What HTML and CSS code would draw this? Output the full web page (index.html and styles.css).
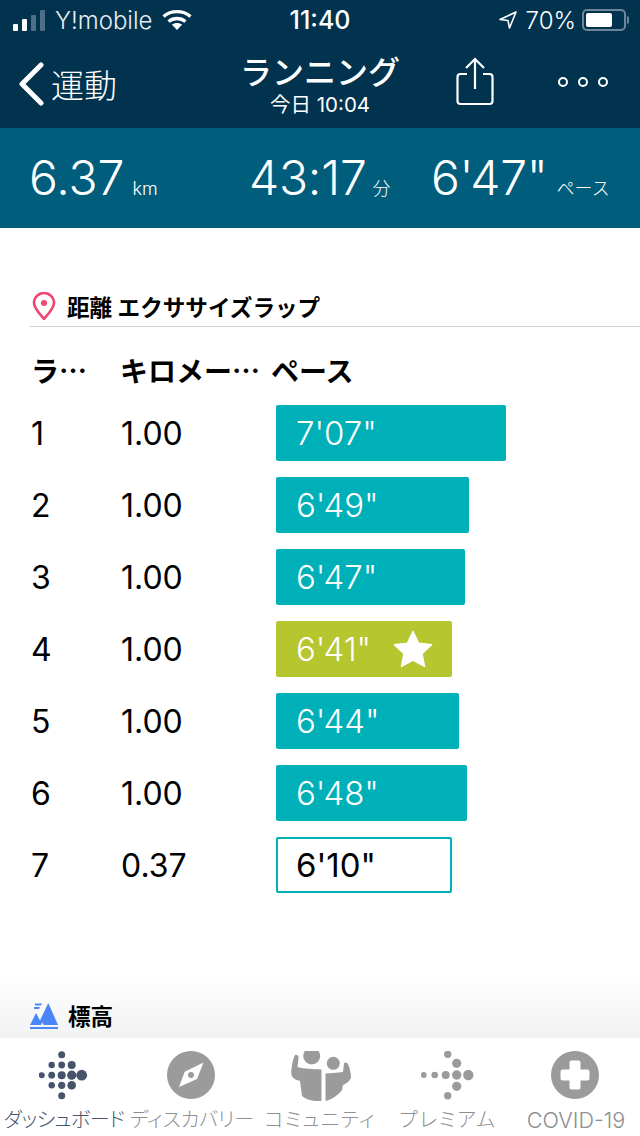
FILE: index.html
```html
<!DOCTYPE html>
<html lang="ja">
<head>
    <meta charset="UTF-8">
    <meta name="viewport" content="width=device-width, initial-scale=1.0">
    <title>ランニング</title>
    <link rel="stylesheet" href="styles.css">
</head>
<body>
    <div class="screen">
        <header class="top">
            <div class="status">
                <div class="status-left">
                    <span class="signal"><i class="on s1"></i><i class="on s2"></i><i class="s3"></i><i class="s4"></i></span>
                    <span class="carrier">Y!mobile</span>
                    <svg class="wifi" width="30" height="22" viewBox="0 0 30 22"><path d="M1.5 7.5C9 1 21 1 28.5 7.5" fill="none" stroke="#fff" stroke-width="3.4"/><path d="M6.5 12.5C11.5 8.5 18.5 8.5 23.5 12.5" fill="none" stroke="#fff" stroke-width="3.4"/><path d="M15 21L9.8 15.6C13 13.4 17 13.4 20.2 15.6Z" fill="#fff"/></svg>
                </div>
                <div class="clock">11:40</div>
                <div class="status-right">
                    <svg width="20" height="20" viewBox="0 0 20 20"><path d="M18 2L2 9.5L10 10.5L11.5 18Z" fill="none" stroke="#fff" stroke-width="1.6" stroke-linejoin="round"/></svg>
                    <span class="percent">70%</span>
                    <span class="battery"><span class="charge"></span></span>
                    <span class="battery-cap"></span>
                </div>
            </div>
            <nav class="nav">
                <div class="back">
                    <svg width="28" height="44" viewBox="0 0 28 44"><path d="M24 3L5 22L24 41" fill="none" stroke="#fff" stroke-width="5" stroke-linecap="round" stroke-linejoin="round"/></svg>
                    <span>運動</span>
                </div>
                <div class="title">
                    <div class="title-main">ランニング</div>
                    <div class="title-sub">今日 10:04</div>
                </div>
                <svg class="share" width="40" height="50" viewBox="0 0 40 50"><path d="M12 17H5.500A3 3 0 0 0 2.500 20V44A3 3 0 0 0 5.500 47H34.500A3 3 0 0 0 37.500 44V20A3 3 0 0 0 34.500 17H28" fill="none" stroke="#fff" stroke-width="2.200"/><path d="M20 32V3M11 11L20 2L29 11" fill="none" stroke="#fff" stroke-width="2.200"/></svg>
                <div class="more"><i></i><i></i><i></i></div>
            </nav>
        </header>

        <section class="summary">
            <div class="stat stat-dist"><b>6.37</b><small>km</small></div>
            <div class="stat stat-time"><b>43:17</b><small>分</small></div>
            <div class="stat stat-pace"><b>6'47"</b><small>ペース</small></div>
        </section>

        <main class="content">
            <h2 class="section-head">
                <svg width="28" height="28" viewBox="0 0 28 28"><path d="M14 27C9 21 4 16 4 11A10 10 0 0 1 24 11C24 16 19 21 14 27Z" fill="none" stroke="#f0466f" stroke-width="2.600" stroke-linejoin="round"/><circle cx="14" cy="11" r="3" fill="#f0466f"/></svg>
                <span>距離 エクササイズラップ</span>
            </h2>
            <div class="table">
                <div class="row head">
                    <div class="col-lap">ラ…</div>
                    <div class="col-km">キロメー…</div>
                    <div class="col-pace">ペース</div>
                </div>
                <div class="row">
                    <div class="col-lap">1</div><div class="col-km">1.00</div>
                    <div class="bar" style="width: 230px">7'07"</div>
                </div>
                <div class="row">
                    <div class="col-lap">2</div><div class="col-km">1.00</div>
                    <div class="bar" style="width: 193px">6'49"</div>
                </div>
                <div class="row">
                    <div class="col-lap">3</div><div class="col-km">1.00</div>
                    <div class="bar" style="width: 189px">6'47"</div>
                </div>
                <div class="row">
                    <div class="col-lap">4</div><div class="col-km">1.00</div>
                    <div class="bar best" style="width: 176px">6'41"
                        <svg class="star" width="40" height="38" viewBox="0 0 40 38"><path d="M20 1.500L25.600 13.200L38.500 14.800L29 23.600L31.500 36.400L20 30.200L8.500 36.400L11 23.600L1.500 14.800L14.400 13.200Z" fill="#fff" stroke="#fff" stroke-width="1.500" stroke-linejoin="round"/></svg>
                    </div>
                </div>
                <div class="row">
                    <div class="col-lap">5</div><div class="col-km">1.00</div>
                    <div class="bar" style="width: 183px">6'44"</div>
                </div>
                <div class="row">
                    <div class="col-lap">6</div><div class="col-km">1.00</div>
                    <div class="bar" style="width: 191px">6'48"</div>
                </div>
                <div class="row">
                    <div class="col-lap">7</div><div class="col-km">0.37</div>
                    <div class="bar partial" style="width: 176px">6'10"</div>
                </div>
            </div>
            <div class="fade"></div>
            <h2 class="section-head elevation">
                <svg width="28" height="28" viewBox="0 0 28 28" fill="#4a86f7"><path d="M0 23L6 11L10 18.500L18.300 1L28 23H14L12 20.500L11 23Z"/><path d="M5 1.500H12L11 3.500H5ZM4 5H10L9 7H4Z"/><rect y="25" width="28" height="2"/></svg>
                <span>標高</span>
            </h2>
        </main>

        <footer class="tabs">
            <div class="tab active">
                <svg width="50" height="50" viewBox="0 0 50 50" fill="#46536a">
                    <circle cx="22.700" cy="3.700" r="3.500"/>
                    <circle cx="12.700" cy="14" r="3.200"/><circle cx="22.700" cy="14" r="3.400"/><circle cx="32.700" cy="14" r="4"/>
                    <circle cx="2.700" cy="24.200" r="3"/><circle cx="12.700" cy="24.200" r="3.400"/><circle cx="22.700" cy="24.200" r="4"/><circle cx="32.700" cy="24.200" r="4.600"/><circle cx="42.700" cy="24.200" r="5.400"/>
                    <circle cx="12.700" cy="34.300" r="3.200"/><circle cx="22.700" cy="34.300" r="3.600"/><circle cx="32.700" cy="34.300" r="4.300"/>
                    <circle cx="22.700" cy="44.700" r="3.500"/>
                </svg>
                <span class="label-dash">ダッシュボード</span>
            </div>
            <div class="tab">
                <svg width="50" height="50" viewBox="1 0 50 50"><circle cx="25" cy="24" r="24" fill="#9b9b9b"/><path d="M37.500 11.500L31 28L13 36L18.700 20.700Z" fill="#fff"/><circle cx="25" cy="24" r="3" fill="#9b9b9b"/></svg>
                <span>ディスカバリー</span>
            </div>
            <div class="tab">
                <svg width="100" height="50" viewBox="0 11 100 50" fill="#9b9b9b">
                    <circle cx="41.700" cy="16" r="8.500"/>
                    <circle cx="63.300" cy="23.300" r="6.500"/>
                    <path d="M25 15C27 14 29 16 28.500 18L27.500 27C35 29 42 29 51.500 29.500V62C44 61 36 60 32 56L30 41C26 40 22 38 21.500 35C20.500 31 23 18 25 15Z"/>
                    <path d="M55.500 33.500C60 33 67 33 73 32L74 24C74 22 77 22 78 24C80 29 81 33 81 38C79 42 75 44 73 45L72 50C68 56 60 60 55.500 61Z"/>
                </svg>
                <span class="label-community">コミュニティ</span>
            </div>
            <div class="tab">
                <svg width="54" height="50" viewBox="0 0 54 50" fill="#9b9b9b">
                    <circle cx="26.700" cy="3.300" r="3.700"/><circle cx="35.700" cy="12.300" r="4.600"/>
                    <circle cx="2.700" cy="24" r="3"/><circle cx="13.700" cy="24" r="3.300"/><circle cx="24.700" cy="24" r="4"/><circle cx="35.700" cy="24" r="4.700"/><circle cx="47.300" cy="24" r="5.200"/>
                    <circle cx="35.700" cy="35.300" r="4.600"/><circle cx="26.700" cy="44.700" r="3.700"/>
                </svg>
                <span class="label-premium">プレミアム</span>
            </div>
            <div class="tab">
                <svg width="50" height="50" viewBox="1 0 50 50"><circle cx="25" cy="24" r="24" fill="#9b9b9b"/><path d="M19.500 11.500A2 2 0 0 1 21.500 9.500H28.500A2 2 0 0 1 30.500 11.500V18.500H37.500A2 2 0 0 1 39.500 20.500V27.500A2 2 0 0 1 37.500 29.500H30.500V36.500A2 2 0 0 1 28.500 38.500H21.500A2 2 0 0 1 19.500 36.500V29.500H12.500A2 2 0 0 1 10.500 27.500V20.500A2 2 0 0 1 12.500 18.500H19.500Z" fill="#fff"/></svg>
                <span class="latin">COVID-19</span>
            </div>
        </footer>
    </div>
</body>
</html>
```

FILE: styles.css
```css
* {
    box-sizing: border-box;
}
html, body {
    margin: 0;
    padding: 0;
}
body {
    background-color: #fff;
    font-family: Inter, "Noto Sans CJK JP", sans-serif;
    color: #000;
}
.screen {
    width: 640px;
    height: 1136px;
    display: flex;
    flex-direction: column;
    overflow: hidden;
}

/* header */
.top {
    height: 128px;
    background-color: #01334f;
    color: #fff;
}
.status {
    height: 40px;
    padding: 0 11px 0 13px;
    display: flex;
    align-items: center;
    justify-content: space-between;
    font-size: 24px;
}
.status-left, .status-right {
    width: 230px;
    display: flex;
    align-items: center;
}
.status-right {
    justify-content: flex-end;
}
.signal {
    display: flex;
    align-items: flex-end;
    gap: 4px;
    height: 22px;
    margin-right: 10px;
}
.signal i {
    width: 5px;
    background-color: #4c7085;
    border-radius: 1px;
}
.signal .on {
    background-color: #fff;
}
.s1 { height: 7px; }
.s2 { height: 12px; }
.s3 { height: 16px; }
.s4 { height: 21px; }
.carrier {
    font-weight: 300;
    color: #e8eef1;
}
.wifi {
    margin-left: 10px;
}
.clock {
    font-weight: 500;
    font-size: 25px;
    margin-right: 2px;
}
.percent {
    font-weight: 300;
    margin: 0 6px 0 8px;
}
.battery {
    width: 44px;
    height: 22px;
    border: 2px solid #6c8799;
    border-radius: 5px;
    padding: 2px;
    display: flex;
}
.charge {
    width: 26px;
    background-color: #fff;
    border-radius: 2px;
}
.battery-cap {
    width: 2px;
    height: 8px;
    margin-left: 1px;
    background-color: #6c8799;
    border-radius: 0 2px 2px 0;
}
.nav {
    position: relative;
    height: 88px;
    display: flex;
    align-items: center;
}
.back {
    position: absolute;
    left: 17px;
    top: 20px;
    display: flex;
    align-items: center;
    gap: 6px;
    font-size: 33px;
    font-weight: 300;
}
.title {
    width: 100%;
    text-align: center;
    padding-top: 2px;
}
.title-main {
    font-size: 32px;
    font-weight: 500;
    line-height: 40px;
}
.title-sub {
    font-size: 20.5px;
    font-weight: 400;
    line-height: 24px;
}
.share {
    position: absolute;
    left: 455px;
    top: 17px;
}
.more {
    position: absolute;
    left: 558px;
    top: 37px;
    display: flex;
    gap: 10px;
}
.more i {
    width: 10px;
    height: 10px;
    border: 2px solid #fff;
    border-radius: 50%;
}

/* totals band */
.summary {
    position: relative;
    height: 100px;
    background-color: #005d7c;
    color: #fff;
}
.stat {
    position: absolute;
    top: 22px;
    display: flex;
    align-items: baseline;
}
.stat b {
    font-size: 48px;
    font-weight: 300;
    line-height: 56px;
}
.stat small {
    font-size: 18px;
    font-weight: 300;
    margin-left: 8px;
}
.stat-dist { left: 29px; }
.stat-time { left: 249px; }
.stat-time b { letter-spacing: -0.2px; }
.stat-time small { margin-left: 6px; }
.stat-pace { left: 431px; }
.stat-pace b { letter-spacing: -0.3px; }
.stat-pace small { margin-left: 9px; }

/* laps */
.content {
    position: relative;
    flex: 1;
    padding-top: 64px;
}
.section-head {
    margin: 0 0 0 30px;
    height: 35px;
    display: flex;
    align-items: center;
    gap: 9px;
    font-size: 22.6px;
    font-weight: 700;
    border-bottom: 1px solid #cfcfcf;
    padding-bottom: 6px;
}
.table {
    margin-top: 22px;
}
.row {
    display: flex;
    align-items: center;
    height: 56px;
    margin: 0 0 16px 31px;
    font-size: 32px;
    font-weight: 400;
}
.row.head {
    height: 42px;
    margin-bottom: 14px;
    font-family: "Noto Sans CJK JP", sans-serif;
    font-size: 28px;
    font-weight: 700;
    white-space: nowrap;
}
.col-lap {
    width: 90px;
}
.col-km {
    width: 155px;
}
.row.head .col-lap {
    width: 89px;
}
.row.head .col-km {
    width: 151px;
}
.bar {
    height: 56px;
    padding-left: 20px;
    display: flex;
    align-items: center;
    background-color: #00b0b9;
    color: #fff;
    border-radius: 2px;
    font-weight: 300;
    font-size: 33px;
}
.bar.best {
    background-color: #b5c62f;
}
.bar.partial {
    background-color: #fff;
    border: 2px solid #00b0b9;
    color: #000;
    font-weight: 400;
    padding-left: 18px;
}
.star {
    margin-left: 22px;
}
.elevation {
    position: absolute;
    left: 0;
    top: 773px;
    border: 0;
    gap: 10px;
}
.fade {
    position: absolute;
    left: 0;
    right: 0;
    bottom: 0;
    height: 60px;
    background: linear-gradient(#fff, #f1f2f2);
}

/* tab bar */
.tabs {
    height: 98px;
    display: flex;
    background-color: #fff;
}
.tab {
    flex: 1 0 0;
    min-width: 0;
    position: relative;
    display: flex;
    flex-direction: column;
    align-items: center;
    padding-top: 13px;
}
.tab svg {
    flex: none;
    height: 50px;
}
.tab span {
    position: absolute;
    top: 68px;
    line-height: 28px;
    white-space: nowrap;
    font-size: 20px;
    font-weight: 300;
    font-feature-settings: "palt";
    color: #8e8e93;
}
.tab .latin {
    font-size: 21.6px;
}
.tab .label-dash {
    letter-spacing: -0.5px;
}
.tab .label-community {
    letter-spacing: 1.3px;
}
.tab .label-premium {
    letter-spacing: 1.8px;
}
.tab.active span {
    color: #46536a;
}
```
